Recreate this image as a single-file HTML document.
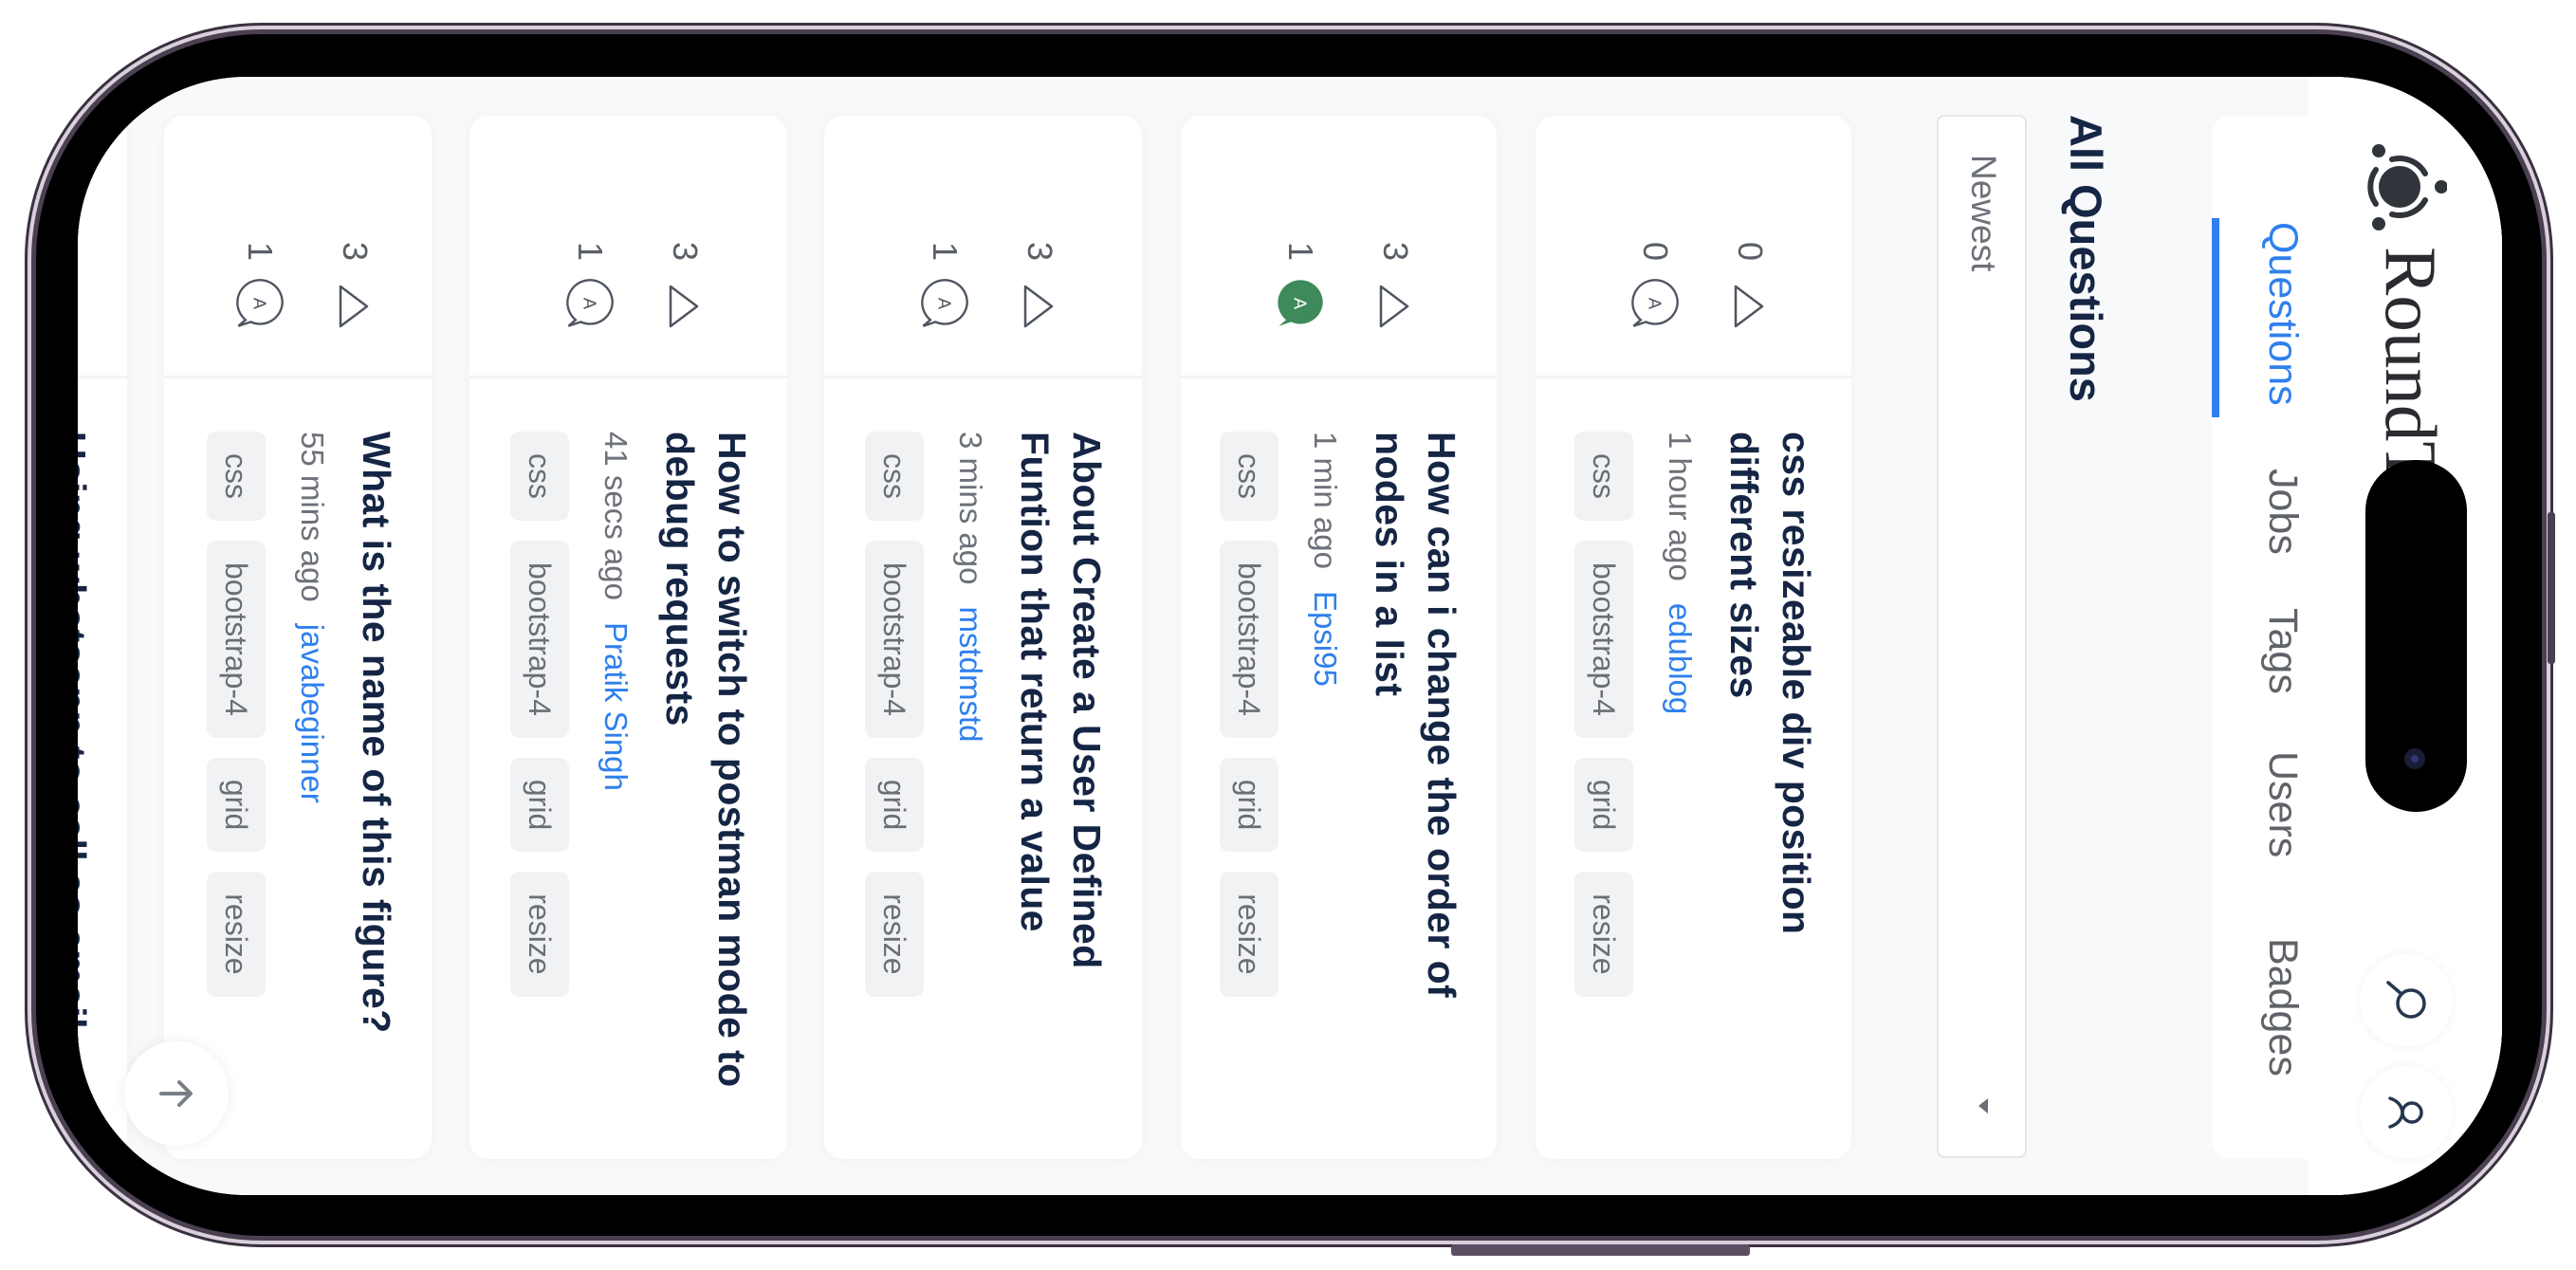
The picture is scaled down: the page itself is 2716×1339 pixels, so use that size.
<!DOCTYPE html>
<html><head><meta charset="utf-8">
<style>
*{margin:0;padding:0;box-sizing:border-box}
html,body{width:2716px;height:1339px;overflow:hidden;background:#fff;font-family:"Liberation Sans",sans-serif}
.abs{position:absolute}
#rim0{left:26px;top:24px;width:2666px;height:1291px;border-radius:250px;background:#3a3140}
#rim1{left:29px;top:27px;width:2660px;height:1285px;border-radius:247px;background:#d9d0db}
#rim2{left:33px;top:31px;width:2652px;height:1277px;border-radius:243px;background:#4a4052}
#bez{left:38px;top:36px;width:2642px;height:1267px;border-radius:238px;background:#000}
#screen{left:82px;top:81px;width:2556px;height:1179px;border-radius:178px;overflow:hidden;background:#f8f9fa}
#P{position:absolute;left:0;top:0;width:1179px;height:2556px;transform-origin:0 0;transform:translate(2556px,0) rotate(90deg);background:#f8f9fa;overflow:hidden}
.card{position:absolute;left:41px;width:1100px;background:#fff;border-radius:20px;box-shadow:0 0 14px rgba(0,0,0,0.035)}
.div{position:absolute;left:274px;top:0;bottom:0;width:3px;background:#f2f3f4}
.num{position:absolute;font-size:36px;color:#5a5f67;width:40px;text-align:center;line-height:40px}
.content{position:absolute;left:333px;top:31px;right:40px}
.title{font-weight:bold;font-size:41px;line-height:55px;color:#152544;letter-spacing:0.4px}
.meta{margin-top:18px;font-size:33px;line-height:44px;color:#6d7179;white-space:nowrap}
.meta a{color:#2f80ed;margin-left:23px;text-decoration:none}
.tags{margin-top:27px;display:flex;gap:21px}
.tag{height:62px;line-height:62px;padding:0 23px;font-size:32px;color:#6b6f75;background:#f1f2f4;border-radius:10px}
.nav{position:absolute;top:206px;font-size:43px;line-height:50px;color:#5f6368}
.circ{position:absolute;width:98px;height:98px;border-radius:50%;background:#fff;box-shadow:0 0 10px rgba(0,0,0,0.06)}
</style></head><body>
<div id="rim0" class="abs"></div>
<div id="rim1" class="abs"></div>
<div id="rim2" class="abs"></div>
<div id="bez" class="abs"></div>
<div class="abs" style="left:1530px;top:1312px;width:315px;height:12px;background:#5a4f63;border-radius:3px"></div>
<div class="abs" style="left:2686px;top:540px;width:8px;height:160px;background:#4a4052;border-radius:3px"></div>

<div id="screen" class="abs">
<div id="P">
  <!-- nav card -->
  <div class="abs" style="left:41px;top:150px;width:1100px;height:156px;background:#fff;border-radius:20px"></div>
  <!-- header -->
  <div class="abs" style="left:0;top:0;width:1179px;height:204px;background:#fff"></div>
  <svg class="abs" style="left:66px;top:58px" width="100" height="100" viewBox="-50 -50 100 100">
    <circle cx="0" cy="0" r="22" fill="#30343b"/>
    <g fill="none" stroke="#30343b" stroke-width="6" stroke-linecap="round">
      <path d="M -14 -27 A 31 31 0 0 0 -29 8"/>
      <path d="M 14 -27 A 31 31 0 0 1 29 8"/>
      <path d="M -18 25 A 31 31 0 0 0 18 25"/>
    </g>
    <circle cx="0" cy="-44" r="7" fill="#30343b"/>
    <circle cx="-38" cy="22" r="7" fill="#30343b"/>
    <circle cx="39" cy="22" r="7" fill="#30343b"/>
  </svg>
  <div class="abs" style="left:179px;top:58px;font-family:'Liberation Serif',serif;font-size:77px;line-height:77px;color:#2a2c30">RoundTable</div>

  <div class="nav" style="left:153px;color:#2f80ed">Questions</div>
  <div class="abs" style="left:149px;top:298px;width:210px;height:8px;background:#2f80ed"></div>
  <div class="nav" style="left:413px">Jobs</div>
  <div class="nav" style="left:560px">Tags</div>
  <div class="nav" style="left:711px">Users</div>
  <div class="nav" style="left:908px">Badges</div>

  <div class="circ" style="left:925px;top:52px"></div>
  <svg class="abs" style="left:949px;top:76px" width="50" height="50" viewBox="0 0 50 50"><circle cx="28" cy="20" r="14" fill="none" stroke="#25374f" stroke-width="3.5"/><path d="M18 30 L6 44" stroke="#25374f" stroke-width="3.5" stroke-linecap="round"/></svg>
  <div class="circ" style="left:1043px;top:52px"></div>
  <svg class="abs" style="left:1067px;top:76px" width="50" height="50" viewBox="0 0 50 50"><circle cx="25" cy="19" r="10" fill="none" stroke="#25374f" stroke-width="3.5"/><path d="M10 42 Q14 30 25 29 Q36 30 40 42" fill="none" stroke="#25374f" stroke-width="3.5" stroke-linecap="round"/></svg>

  <!-- heading -->
  <div class="abs" style="left:40px;top:411px;font-size:47px;line-height:56px;font-weight:bold;color:#152544">All Questions</div>
  <div class="abs" style="left:40px;top:501px;width:1100px;height:95px;background:#fff;border:2px solid #e4e6e8;border-radius:8px"></div>
  <div class="abs" style="left:82px;top:524px;font-size:37px;line-height:46px;color:#6d7179">Newest</div>
  <svg class="abs" style="left:1076px;top:541px" width="18" height="12" viewBox="0 0 18 12"><path d="M1 1 L17 1 L9 11 Z" fill="#6b6f75"/></svg>

  <!-- card 1 -->
  <div class="card" style="top:686px;height:333px">
    <div class="div"></div>
    <div class="num" style="left:123px;top:87px">0</div>
    <svg class="abs" style="left:177px;top:91px" width="48" height="34" viewBox="0 0 48 34"><path d="M3 31 L24 3 L45 31 Z" fill="none" stroke="#4f5561" stroke-width="2.5" stroke-linejoin="round"/></svg>
    <div class="num" style="left:123px;top:187px">0</div>
    <svg class="abs" style="left:170px;top:179px" width="56" height="56" viewBox="0 0 52 52"><path d="M26 4 A22 22 0 1 0 42 40 L48 47 L44 35 A22 22 0 0 0 26 4 Z" fill="none" stroke="#4f5561" stroke-width="2.2"/><text x="26" y="32" font-size="17" text-anchor="middle" fill="#4f5561" font-family="Liberation Sans">A</text></svg>
    <div class="content">
      <div class="title">css resizeable div position<br>different sizes</div>
      <div class="meta">1 hour ago<a>edublog</a></div>
      <div class="tags"><span class="tag">css</span><span class="tag">bootstrap-4</span><span class="tag">grid</span><span class="tag">resize</span></div>
    </div>
  </div>

  <!-- card 2 -->
  <div class="card" style="top:1060px;height:333px">
    <div class="div"></div>
    <div class="num" style="left:123px;top:87px">3</div>
    <svg class="abs" style="left:177px;top:91px" width="48" height="34" viewBox="0 0 48 34"><path d="M3 31 L24 3 L45 31 Z" fill="none" stroke="#4f5561" stroke-width="2.5" stroke-linejoin="round"/></svg>
    <div class="num" style="left:123px;top:187px">1</div>
    <svg class="abs" style="left:170px;top:179px" width="56" height="56" viewBox="0 0 52 52"><path d="M26 4 A22 22 0 1 0 42 40 L48 47 L44 35 A22 22 0 0 0 26 4 Z" fill="#3f8a5a"/><text x="26" y="32" font-size="17" text-anchor="middle" fill="#fff" font-family="Liberation Sans">A</text></svg>
    <div class="content">
      <div class="title">How can i change the order of<br>nodes in a list</div>
      <div class="meta">1 min ago<a>Epsi95</a></div>
      <div class="tags"><span class="tag">css</span><span class="tag">bootstrap-4</span><span class="tag">grid</span><span class="tag">resize</span></div>
    </div>
  </div>

  <!-- card 3 -->
  <div class="card" style="top:1434px;height:335px">
    <div class="div"></div>
    <div class="num" style="left:123px;top:88px">3</div>
    <svg class="abs" style="left:177px;top:92px" width="48" height="34" viewBox="0 0 48 34"><path d="M3 31 L24 3 L45 31 Z" fill="none" stroke="#4f5561" stroke-width="2.5" stroke-linejoin="round"/></svg>
    <div class="num" style="left:123px;top:188px">1</div>
    <svg class="abs" style="left:170px;top:180px" width="56" height="56" viewBox="0 0 52 52"><path d="M26 4 A22 22 0 1 0 42 40 L48 47 L44 35 A22 22 0 0 0 26 4 Z" fill="none" stroke="#4f5561" stroke-width="2.2"/><text x="26" y="32" font-size="17" text-anchor="middle" fill="#4f5561" font-family="Liberation Sans">A</text></svg>
    <div class="content">
      <div class="title">About Create a User Defined<br>Funtion that return a value</div>
      <div class="meta">3 mins ago<a>mstdmstd</a></div>
      <div class="tags"><span class="tag">css</span><span class="tag">bootstrap-4</span><span class="tag">grid</span><span class="tag">resize</span></div>
    </div>
  </div>

  <!-- card 4 -->
  <div class="card" style="top:1808px;height:335px">
    <div class="div"></div>
    <div class="num" style="left:123px;top:88px">3</div>
    <svg class="abs" style="left:177px;top:92px" width="48" height="34" viewBox="0 0 48 34"><path d="M3 31 L24 3 L45 31 Z" fill="none" stroke="#4f5561" stroke-width="2.5" stroke-linejoin="round"/></svg>
    <div class="num" style="left:123px;top:188px">1</div>
    <svg class="abs" style="left:170px;top:180px" width="56" height="56" viewBox="0 0 52 52"><path d="M26 4 A22 22 0 1 0 42 40 L48 47 L44 35 A22 22 0 0 0 26 4 Z" fill="none" stroke="#4f5561" stroke-width="2.2"/><text x="26" y="32" font-size="17" text-anchor="middle" fill="#4f5561" font-family="Liberation Sans">A</text></svg>
    <div class="content">
      <div class="title">How to switch to postman mode to<br>debug requests</div>
      <div class="meta">41 secs ago<a>Pratik Singh</a></div>
      <div class="tags"><span class="tag">css</span><span class="tag">bootstrap-4</span><span class="tag">grid</span><span class="tag">resize</span></div>
    </div>
  </div>

  <!-- card 5 -->
  <div class="card" style="top:2183px;height:282px">
    <div class="div"></div>
    <div class="num" style="left:123px;top:61px">3</div>
    <svg class="abs" style="left:177px;top:65px" width="48" height="34" viewBox="0 0 48 34"><path d="M3 31 L24 3 L45 31 Z" fill="none" stroke="#4f5561" stroke-width="2.5" stroke-linejoin="round"/></svg>
    <div class="num" style="left:123px;top:161px">1</div>
    <svg class="abs" style="left:170px;top:153px" width="56" height="56" viewBox="0 0 52 52"><path d="M26 4 A22 22 0 1 0 42 40 L48 47 L44 35 A22 22 0 0 0 26 4 Z" fill="none" stroke="#4f5561" stroke-width="2.2"/><text x="26" y="32" font-size="17" text-anchor="middle" fill="#4f5561" font-family="Liberation Sans">A</text></svg>
    <div class="content">
      <div class="title">What is the name of this figure?</div>
      <div class="meta">55 mins ago<a>javabeginner</a></div>
      <div class="tags"><span class="tag">css</span><span class="tag">bootstrap-4</span><span class="tag">grid</span><span class="tag">resize</span></div>
    </div>
  </div>

  <!-- card 6 (partial) -->
  <div class="card" style="top:2504px;height:330px">
    <div class="div"></div>
    <div class="content">
      <div class="title">Using whatsapp to call as email<br>address</div>
    </div>
  </div>

  <!-- floating button -->
  <div class="abs" style="left:1017px;top:2397px;width:110px;height:110px;border-radius:50%;background:#fff;box-shadow:0 0 14px rgba(0,0,0,0.07)"></div>
  <svg class="abs" style="left:1052px;top:2432px" width="40" height="40" viewBox="0 0 40 40"><path d="M20 36 L20 6 M8 17 L20 5 L32 17" fill="none" stroke="#7a7f87" stroke-width="4" stroke-linecap="round" stroke-linejoin="round"/></svg>
</div>
</div>

<!-- dynamic island -->
<div class="abs" style="left:2494px;top:485px;width:107px;height:371px;border-radius:54px;background:#000"></div>
<div class="abs" style="left:2535px;top:789px;width:22px;height:22px;border-radius:50%;background:#1b1d33"></div>
<div class="abs" style="left:2542px;top:796px;width:8px;height:8px;border-radius:50%;background:#2c3a7a"></div>
</body></html>
